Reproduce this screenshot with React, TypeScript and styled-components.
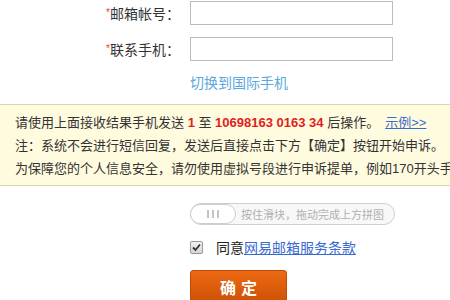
import styled, { createGlobalStyle } from "styled-components";

const GlobalStyle = createGlobalStyle`
    html, body {
        margin: 0;
        padding: 0;
        background: #fff;
        overflow: hidden;
    }
    body {
        font-family: "Liberation Sans", "Noto Sans CJK SC", sans-serif;
        color: #333;
    }
`;

const Page = styled.div`
    width: 450px;
    height: 300px;
    overflow: hidden;
    padding-top: 1px;
    box-sizing: border-box;
`;

const FormRow = styled.div<{ $gap?: number }>`
    display: grid;
    grid-template-columns: 180px 1fr;
    column-gap: 10px;
    align-items: center;
    margin-bottom: ${(p) => p.$gap ?? 0}px;
`;

const Label = styled.label`
    text-align: right;
    font-size: 14px;
    color: #333;
    white-space: nowrap;

    .form__required {
        color: #e03c3c;
        font-size: 10px;
        vertical-align: 3px;
    }
`;

const TextInput = styled.input`
    width: 203px;
    height: 24px;
    box-sizing: border-box;
    border: 1px solid #bcbcbc;
    padding: 0 6px;
    margin: 0;
    font-size: 14px;
    outline: none;
`;

const SwitchLink = styled.a`
    font-size: 14px;
    color: #5aa8dd;
    text-decoration: none;
    line-height: 20px;
`;

const Notice = styled.div`
    margin-top: 11px;
    background: #fffbdf;
    border-top: 1px solid #ddd5ad;
    border-bottom: 1px solid #ddd5ad;
    padding: 6px 0 5px 15px;
    font-size: 13px;
    line-height: 23px;
    color: #333;
    white-space: nowrap;
    overflow: hidden;

    p {
        margin: 0;
    }

    .notice__num {
        color: #e01e1e;
        font-weight: bold;
        font-family: "Liberation Sans", Arial, sans-serif;
        font-size: 13px;
    }

    .notice__example {
        color: #3a6ad0;
        text-decoration: underline;
        margin-left: 6px;
    }
`;

const Field = styled.div<{ $top: number }>`
    margin: ${(p) => p.$top}px 0 0 190px;
`;

const Slider = styled.div`
    width: 205px;
    height: 22px;
    box-sizing: border-box;
    border: 1px solid #cfcfcf;
    border-radius: 11px;
    background: #f8f8f8;
    display: flex;
    align-items: center;
    gap: 5px;
    font-size: 11px;
    color: #b0b0b0;
    white-space: nowrap;
`;

const Knob = styled.div`
    width: 46px;
    height: 20px;
    box-sizing: border-box;
    border: 1px solid #cdcdcd;
    border-radius: 10px;
    margin-left: -1px;
    background: #fff;
    display: flex;
    align-items: center;
    justify-content: center;
    gap: 3px;

    i {
        display: block;
        width: 2px;
        height: 8px;
        background: #c4c4c4;
    }
`;

const AgreeRow = styled.div`
    display: flex;
    align-items: center;
    font-size: 14px;
    color: #222;

    a {
        color: #3a6ad0;
        text-decoration: underline;
    }
`;

const CheckBox = styled.span`
    width: 11px;
    height: 11px;
    border: 1px solid #9a9a9a;
    border-radius: 2px;
    background: linear-gradient(#f2f2f2, #d4d4d4);
    margin-right: 13px;
    display: flex;
    align-items: center;
    justify-content: center;
`;

const SubmitButton = styled.button`
    width: 97px;
    height: 36px;
    border: 1px solid #c04a06;
    border-radius: 3px;
    background: linear-gradient(#ec6a14, #cc4e04);
    color: #fff;
    font-size: 16px;
    font-weight: bold;
    letter-spacing: 5px;
    padding: 0 0 2px 5px;
    font-family: "Noto Sans CJK SC", sans-serif;
    cursor: pointer;
`;

export default function App(): JSX.Element {
    return (
        <Page>
            <GlobalStyle />
            <FormRow $gap={12}>
                <Label>
                    <span className="form__required">*</span>邮箱帐号：
                </Label>
                <TextInput />
            </FormRow>
            <FormRow $gap={12}>
                <Label>
                    <span className="form__required">*</span>联系手机：
                </Label>
                <TextInput />
            </FormRow>
            <FormRow>
                <span />
                <SwitchLink>切换到国际手机</SwitchLink>
            </FormRow>
            <Notice>
                <p>
                    请使用上面接收结果手机发送 <span className="notice__num">1</span> 至{" "}
                    <span className="notice__num">10698163 0163 34</span> 后操作。
                    <a className="notice__example">示例&gt;&gt;</a>
                </p>
                <p>注：系统不会进行短信回复，发送后直接点击下方【确定】按钮开始申诉。</p>
                <p>为保障您的个人信息安全，请勿使用虚拟号段进行申诉提单，例如170开头手机号。</p>
            </Notice>
            <Field $top={17}>
                <Slider>
                    <Knob>
                        <i />
                        <i />
                        <i />
                    </Knob>
                    按住滑块，拖动完成上方拼图
                </Slider>
            </Field>
            <Field $top={12}>
                <AgreeRow>
                    <CheckBox>
                        <svg width="9" height="9" viewBox="0 0 9 9">
                            <path d="M1 4.5 L3.5 7 L8 1.5" fill="none" stroke="#333" strokeWidth="1.8" />
                        </svg>
                    </CheckBox>
                    同意<a>网易邮箱服务条款</a>
                </AgreeRow>
            </Field>
            <Field $top={13}>
                <SubmitButton>确定</SubmitButton>
            </Field>
        </Page>
    );
}
